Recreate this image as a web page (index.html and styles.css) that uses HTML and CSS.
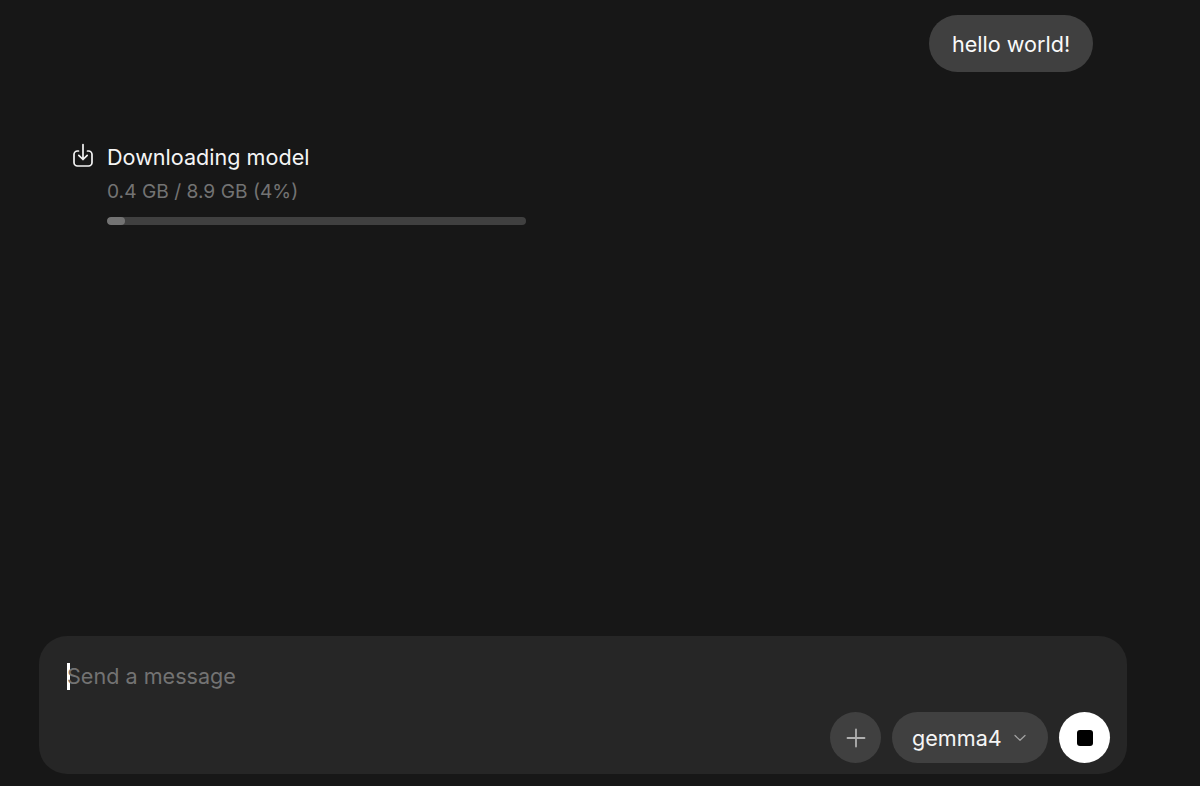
FILE: index.html
```html
<!DOCTYPE html>
<html lang="en">
<head>
<meta charset="utf-8">
<title>Chat</title>
<link rel="stylesheet" href="styles.css">
</head>
<body>
<main class="chat">
  <div class="user-row"><div class="bubble">hello world!</div></div>
  <section class="download">
    <svg class="dl-icon" width="22" height="25" viewBox="0 0 22 25" fill="none" stroke="#f4f4f4" stroke-width="1.7" stroke-linecap="round" stroke-linejoin="round">
      <path d="M6.500 8H5.500A3.500 3.500 0 0 0 2 11.500v8A3.500 3.500 0 0 0 5.500 23h11a3.500 3.500 0 0 0 3.500-3.500v-8A3.500 3.500 0 0 0 16.500 8h-1"/>
      <path d="M11 1.500V16.500M6.800 12.300 11 16.500 15.200 12.300"/>
    </svg>
    <div class="dl-body">
      <div class="dl-title">Downloading model</div>
      <div class="dl-size">0.4 GB / 8.9 GB (4%)</div>
      <div class="track"><div class="fill"></div></div>
    </div>
  </section>
</main>
<form class="composer">
  <div class="input-line"><span class="caret"></span><span class="placeholder">Send a message</span></div>
  <div class="actions">
    <button type="button" class="round add" aria-label="Add">
      <svg width="20" height="20" viewBox="0 0 20 20" fill="none" stroke="#b0b0b0" stroke-width="1.800" stroke-linecap="round"><path d="M10 1.500v17M1.500 10h17"/></svg>
    </button>
    <button type="button" class="model">gemma4
      <svg width="12" height="8" viewBox="0 0 12 8" fill="none" stroke="#a3a3a3" stroke-width="1.200" stroke-linecap="round" stroke-linejoin="round"><path d="M1 1.500 6 6.300l5-4.800"/></svg>
    </button>
    <button type="button" class="round stop" aria-label="Stop"><span class="stop-square"></span></button>
  </div>
</form>
</body>
</html>
```
FILE: styles.css
```css
* { box-sizing: border-box; }
html, body { margin: 0; height: 100%; }
body {
  height: 786px;
  overflow: hidden;
  background: #171717;
  color: #f5f5f5;
  font-family: Inter, "Liberation Sans", sans-serif;
  font-weight: 400;
  display: flex;
  flex-direction: column;
}
.chat { flex: 1; padding: 15px 107px 0 72px; }
.user-row { display: flex; justify-content: flex-end; }
.bubble {
  height: 57px;
  width: 164px;
  justify-content: center;
  display: flex;
  align-items: center;
  border-radius: 28.5px;
  background: #404040;
  font-size: 21.6px;
  color: #fafafa;
}
.download { display: flex; gap: 13px; margin-top: 71px; }
.dl-icon { flex: none; }
.dl-body { width: 419px; }
.dl-title { font-size: 21.6px; line-height: 30px; margin-top: -1px; color: #f5f5f5; }
.dl-size { font-size: 19.2px; line-height: 28px; margin-top: 5px; color: #737373; }
.track { height: 8px; margin-top: 12px; border-radius: 4px; background: #404040; overflow: hidden; }
.fill { width: 18px; height: 100%; border-radius: 4px; background: #737373; }
.composer {
  margin: 0 73px 12px 39px;
  height: 138px;
  border-radius: 28px;
  background: #262626;
  padding: 24px 17px 11px 28px;
  display: flex;
  flex-direction: column;
  justify-content: space-between;
}
.input-line { display: flex; align-items: center; height: 32px; }
.caret { width: 3px; height: 27px; background: #fff; margin-right: -3px; flex: none; }
.placeholder { font-size: 21.6px; color: #737373; }
.actions { display: flex; justify-content: flex-end; gap: 11px; }
button { border: 0; padding: 0; font: inherit; }
.round {
  width: 51px;
  height: 51px;
  border-radius: 50%;
  display: flex;
  align-items: center;
  justify-content: center;
}
.add { background: #404040; }
.stop { background: #fff; }
.stop-square { width: 16px; height: 16px; border-radius: 3px; background: #000; }
.model {
  height: 51px;
  width: 156px;
  padding-left: 20px;
  border-radius: 25.5px;
  background: #404040;
  color: #f5f5f5;
  font-size: 21.6px;
  display: flex;
  align-items: center;
  gap: 12px;
}
```
